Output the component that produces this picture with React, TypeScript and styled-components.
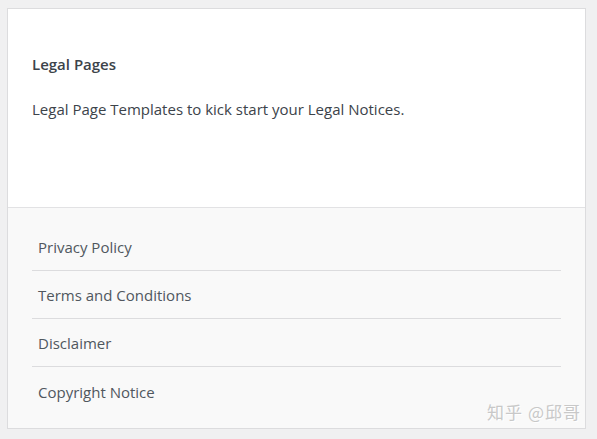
import styled, { createGlobalStyle } from "styled-components";

const Global = createGlobalStyle`
  body {
    margin: 0;
    background: #f0f0f1;
    font-family: "Open Sans", "Noto Sans", sans-serif;
  }
`;

const items = ["Privacy Policy", "Terms and Conditions", "Disclaimer", "Copyright Notice"];

const App = () => {
  return (
    <Page>
      <Global />
      <Card>
        <Intro>
          <Heading>Legal Pages</Heading>
          <Desc>Legal Page Templates to kick start your Legal Notices.</Desc>
        </Intro>
        <Footer>
          <List>
            {items.map((name, i) => (
              <Item key={name} last={i === items.length - 1}>
                {name}
              </Item>
            ))}
          </List>
          <Mark>知乎 @邱哥</Mark>
        </Footer>
      </Card>
    </Page>
  );
};

export default App;

const Page = styled.div`
  width: 597px;
  height: 439px;
  padding: 8px 0 0 7px;
  box-sizing: border-box;
`;

const Card = styled.div`
  width: 579px;
  height: 421px;
  box-sizing: border-box;
  border: 1px solid #dcdcde;
  background: #fff;
  display: flex;
  flex-direction: column;
`;

const Intro = styled.div`
  height: 199px;
  padding: 45px 24px 0 24px;
  box-sizing: border-box;
  border-bottom: 1px solid #e2e2e4;
`;

const Heading = styled.div`
  font-size: 15px;
  font-weight: 600;
  color: #3c434a;
  line-height: 20px;
`;

const Desc = styled.p`
  margin: 25px 0 0;
  font-size: 15px;
  color: #3c434a;
  line-height: 20px;
`;

const Footer = styled.div`
  flex: 1;
  background: #f9f9f9;
  padding: 15px 24px 0 24px;
  position: relative;
`;

const List = styled.ul`
  list-style: none;
  margin: 0;
  padding: 0;
`;

const Item = styled.li<{ last?: boolean }>`
  height: 48px;
  box-sizing: border-box;
  display: flex;
  align-items: center;
  padding: 1px 0 0 6px;
  font-size: 15px;
  color: #50575e;
  border-bottom: ${(p) => (p.last ? "none" : "1px solid #dcdcde")};
`;

const Mark = styled.span`
  position: absolute;
  right: 4px;
  bottom: 4px;
  font-family: "Noto Sans CJK SC", sans-serif;
  font-size: 17px;
  letter-spacing: 1px;
  color: #c8c8c8;
  text-shadow: 1px 1px 0 #fff;
`;
